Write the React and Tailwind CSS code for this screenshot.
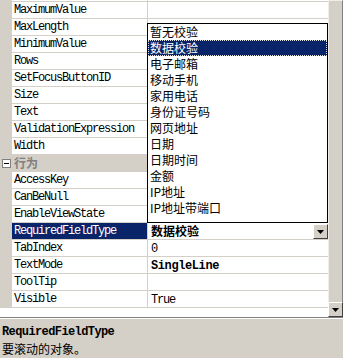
const mono = "font-['Liberation_Mono','Noto_Sans_CJK_SC',monospace]";
const cjk = "font-['Noto_Sans_CJK_SC',sans-serif]";

const topRows = [
  { name: '', value: '' },
  { name: 'MaximumValue', value: '' },
  { name: 'MaxLength', value: '' },
  { name: 'MinimumValue', value: '' },
  { name: 'Rows', value: '' },
  { name: 'SetFocusButtonID', value: '' },
  { name: 'Size', value: '' },
  { name: 'Text', value: '' },
  { name: 'ValidationExpression', value: '' },
  { name: 'Width', value: '' },
];

const behaviorRows = [
  { name: 'AccessKey', value: '' },
  { name: 'CanBeNull', value: '' },
  { name: 'EnableViewState', value: '' },
  { name: 'RequiredFieldType', value: '数据校验', bold: true, selected: true, dropdown: true },
  { name: 'TabIndex', value: '0' },
  { name: 'TextMode', value: 'SingleLine', bold: true },
  { name: 'ToolTip', value: '' },
  { name: 'Visible', value: 'True' },
];

const options = [
  '暂无校验',
  '数据校验',
  '电子邮箱',
  '移动手机',
  '家用电话',
  '身份证号码',
  '网页地址',
  '日期',
  '日期时间',
  '金额',
  'IP地址',
  'IP地址带端口',
];

function Row({ row }) {
  const isCjk = /[\u4e00-\u9fff]/.test(row.value);
  return (
    <div className="flex h-[17px]">
      <div className="w-[12px] shrink-0 bg-[#d4d0c8]" />
      <div
        className={`w-[135px] shrink-0 border-b border-[#d4d0c8] pl-[2px] text-[12px] leading-[16px] tracking-[-1.2px] whitespace-nowrap overflow-hidden ${mono} ${
          row.selected ? 'bg-[#0a246a] text-white' : 'bg-white text-black'
        }`}
      >
        {row.name}
      </div>
      <div className="w-px shrink-0 bg-[#d4d0c8]" />
      <div className="relative flex-1 border-b border-[#d4d0c8] bg-white pl-[3px] text-[12px] leading-[16px] text-black">
        <span
          className={`${isCjk ? cjk : mono} ${!isCjk && row.bold ? 'tracking-[-0.4px]' : ''} ${
            !isCjk && !row.bold ? 'tracking-[-1.2px]' : ''
          } ${row.bold ? 'font-bold' : ''}`}
        >
          {row.value}
        </span>
        {row.dropdown && (
          <div className="absolute right-0 top-[1px] flex h-[15px] w-[15px] items-center justify-center border-t border-l border-white border-r border-b border-r-[#404040] border-b-[#404040] bg-[#d4d0c8]">
            <svg width="7" height="4" viewBox="0 0 7 4">
              <path d="M0 0h7L3.5 4z" fill="#000" />
            </svg>
          </div>
        )}
      </div>
    </div>
  );
}

export default function App() {
  return (
    <div className="relative h-[358px] w-[343px] overflow-hidden bg-[#d4d0c8] text-black">
      <div className="flex h-[317px]">
        <div className="relative w-[328px] bg-white">
          <div className="mt-[-15px]">
            {topRows.map((r, i) => (
              <Row key={i} row={r} />
            ))}
            <div className="flex h-[17px] items-center border-b border-[#d4d0c8] bg-[#d4d0c8]">
              <div className="flex w-[12px] justify-center">
                <div className="flex h-[9px] w-[9px] items-center justify-center border border-[#808080] bg-white">
                  <div className="h-px w-[5px] bg-black" />
                </div>
              </div>
              <span className={`pl-[2px] text-[12px] font-bold text-[#808080] ${cjk}`}>行为</span>
            </div>
            {behaviorRows.map((r, i) => (
              <Row key={i} row={r} />
            ))}
          </div>

          <div className="absolute left-[147px] top-[23px] h-[200px] w-[181px] border border-black bg-white">
            {options.map((o, i) => (
              <div
                key={o}
                className={`h-[16px] pl-[2px] text-[12px] leading-[16px] ${cjk} ${
                  i === 1 ? 'bg-[#0a246a] text-white outline-1 outline-dotted outline-offset-[-1px] outline-[#e0e0e0]' : ''
                }`}
              >
                {o}
              </div>
            ))}
          </div>
        </div>

        <div className="flex w-[15px] flex-col">
          <div className="flex-1 border-t border-l border-[#f0eee9] border-r border-r-[#808080] bg-[#d4d0c8]" />
          <div className="flex h-[15px] items-center justify-center border-t border-l border-white border-r border-b border-r-[#404040] border-b-[#404040] bg-[#d4d0c8]">
            <svg width="7" height="4" viewBox="0 0 7 4">
              <path d="M0 0h7L3.5 4z" fill="#000" />
            </svg>
          </div>
        </div>
      </div>

      <div className="h-px bg-[#808080]" />
      <div className="border-t border-white px-[2px] pt-[6px]">
        <div className={`text-[12px] leading-[14px] font-bold tracking-[-0.6px] ${mono}`}>RequiredFieldType</div>
        <div className={`mt-[3px] text-[12px] leading-[14px] ${cjk}`}>要滚动的对象。</div>
      </div>
    </div>
  );
}
